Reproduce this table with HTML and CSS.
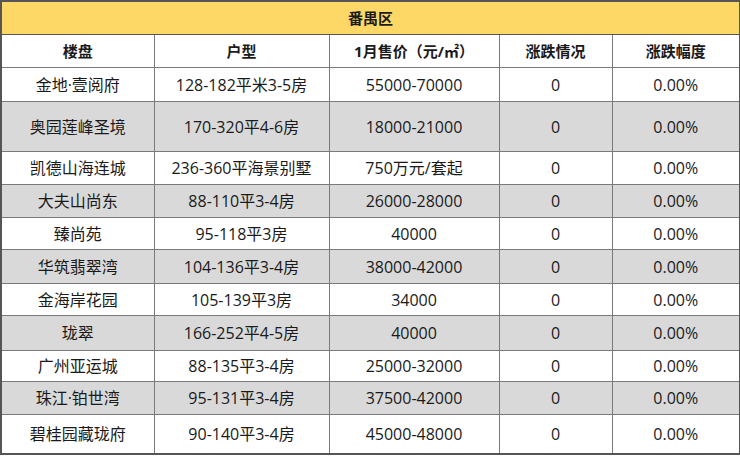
FILE: index.html
```html
<!DOCTYPE html>
<html lang="zh-CN">
<head>
<meta charset="utf-8">
<link rel="stylesheet" href="styles.css">
</head>
<body>
<table class="t">
<colgroup>
<col class="c1"><col class="c2"><col class="c3"><col class="c4"><col class="c5">
</colgroup>
<tr class="title"><td colspan="5">番禺区</td></tr>
<tr class="head"><td>楼盘</td><td>户型</td><td>1月售价（元/㎡）</td><td>涨跌情况</td><td>涨跌幅度</td></tr>
<tr class="r h34"><td>金地·壹阅府</td><td>128-182平米3-5房</td><td>55000-70000</td><td>0</td><td>0.00%</td></tr>
<tr class="r g h50"><td>奥园莲峰圣境</td><td>170-320平4-6房</td><td>18000-21000</td><td>0</td><td>0.00%</td></tr>
<tr class="r h33"><td>凯德山海连城</td><td>236-360平海景别墅</td><td>750万元/套起</td><td>0</td><td>0.00%</td></tr>
<tr class="r g h33"><td>大夫山尚东</td><td>88-110平3-4房</td><td>26000-28000</td><td>0</td><td>0.00%</td></tr>
<tr class="r h32"><td>臻尚苑</td><td>95-118平3房</td><td>40000</td><td>0</td><td>0.00%</td></tr>
<tr class="r g h34"><td>华筑翡翠湾</td><td>104-136平3-4房</td><td>38000-42000</td><td>0</td><td>0.00%</td></tr>
<tr class="r h32"><td>金海岸花园</td><td>105-139平3房</td><td>34000</td><td>0</td><td>0.00%</td></tr>
<tr class="r g h35"><td>珑翠</td><td>166-252平4-5房</td><td>40000</td><td>0</td><td>0.00%</td></tr>
<tr class="r h31"><td>广州亚运城</td><td>88-135平3-4房</td><td>25000-32000</td><td>0</td><td>0.00%</td></tr>
<tr class="r g h33"><td>珠江·铂世湾</td><td>95-131平3-4房</td><td>37500-42000</td><td>0</td><td>0.00%</td></tr>
<tr class="r h40"><td>碧桂园藏珑府</td><td>90-140平3-4房</td><td>45000-48000</td><td>0</td><td>0.00%</td></tr>
</table>
</body>
</html>
```
FILE: styles.css
```css
html, body {
  margin: 0;
  padding: 0;
  background: #ffffff;
}
.t {
  border-collapse: collapse;
  table-layout: fixed;
  width: 739px;
  font-family: "Open Sans", "Noto Sans CJK SC", sans-serif;
  font-size: 16px;
  color: #1a1a1a;
  border: 2px solid #555555;
}
.c1 { width: 153px; }
.c2 { width: 175px; }
.c3 { width: 170px; }
.c4 { width: 113px; }
.c5 { width: 128px; }
.t td {
  border: 1px solid #7a7a7a;
  text-align: center;
  vertical-align: middle;
  padding: 0;
  white-space: nowrap;
  overflow: hidden;
  line-height: 20px;
}
.title td {
  background: #fdd866;
  font-weight: bold;
  height: 32px;
  font-size: 15px;
  border-bottom: 1px solid #555555;
}
.head td {
  font-weight: bold;
  height: 32px;
  font-size: 15px;
}
.g td { background: #d9d9d9; }
.h31 td { height: 30px; }
.h32 td { height: 31px; }
.h33 td { height: 32px; }
.h34 td { height: 33px; }
.h35 td { height: 34px; }
.h40 td { height: 38px; }
.h50 td { height: 49px; }
```
